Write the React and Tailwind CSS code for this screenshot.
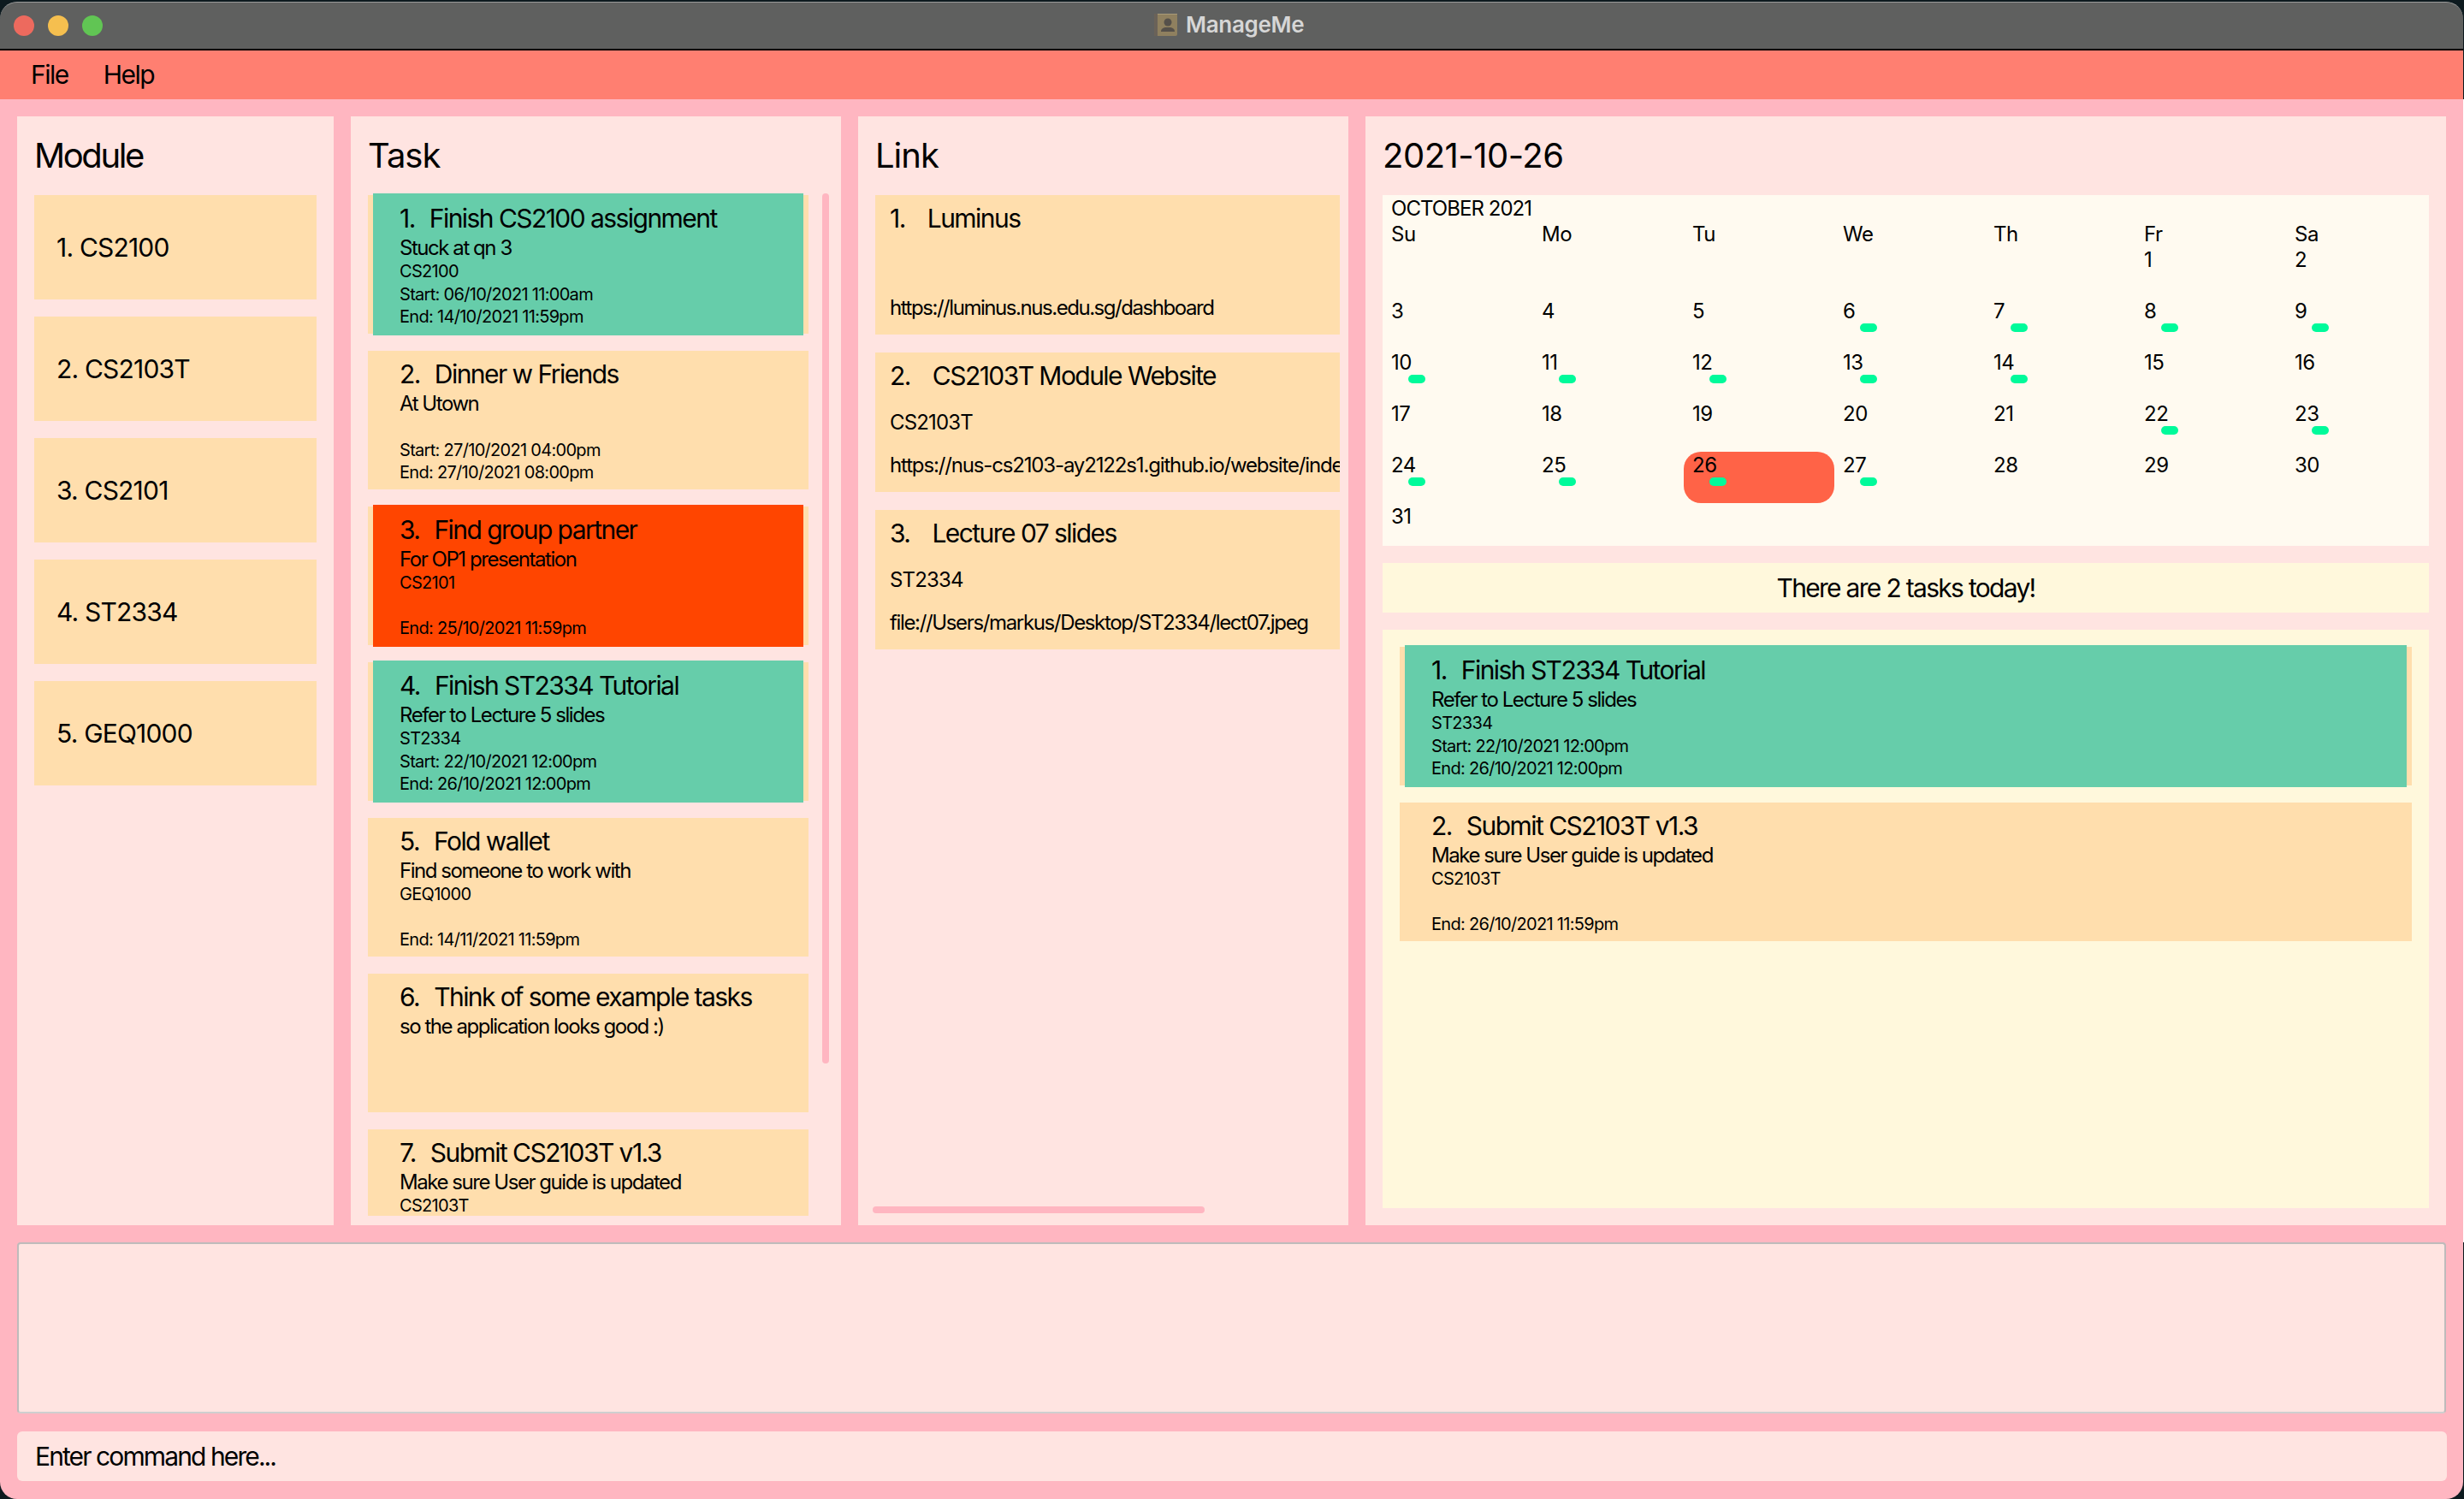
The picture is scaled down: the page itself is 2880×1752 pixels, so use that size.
const FONT = { fontFamily: 'Inter, sans-serif' }

const modules = ['CS2100', 'CS2103T', 'CS2101', 'ST2334', 'GEQ1000']

const tasks = [
  { name: 'Finish CS2100 assignment', desc: 'Stuck at qn 3', mod: 'CS2100', start: 'Start: 06/10/2021 11:00am', end: 'End: 14/10/2021 11:59pm', tone: 'green' },
  { name: 'Dinner w Friends', desc: 'At Utown', mod: '', start: 'Start: 27/10/2021 04:00pm', end: 'End: 27/10/2021 08:00pm' },
  { name: 'Find group partner', desc: 'For OP1 presentation', mod: 'CS2101', start: '', end: 'End: 25/10/2021 11:59pm', tone: 'red' },
  { name: 'Finish ST2334 Tutorial', desc: 'Refer to Lecture 5 slides', mod: 'ST2334', start: 'Start: 22/10/2021 12:00pm', end: 'End: 26/10/2021 12:00pm', tone: 'green' },
  { name: 'Fold wallet', desc: 'Find someone to work with', mod: 'GEQ1000', start: '', end: 'End: 14/11/2021 11:59pm' },
  { name: 'Think of some example tasks', desc: 'so the application looks good :)', mod: '', start: '', end: '' },
  { name: 'Submit CS2103T v1.3', desc: 'Make sure User guide is updated', mod: 'CS2103T', start: '', end: '' },
]

const todayTasks = [
  { name: 'Finish ST2334 Tutorial', desc: 'Refer to Lecture 5 slides', mod: 'ST2334', start: 'Start: 22/10/2021 12:00pm', end: 'End: 26/10/2021 12:00pm', tone: 'green' },
  { name: 'Submit CS2103T v1.3', desc: 'Make sure User guide is updated', mod: 'CS2103T', start: '', end: 'End: 26/10/2021 11:59pm' },
]

const links = [
  { name: 'Luminus', mod: '', url: 'https://luminus.nus.edu.sg/dashboard', urlClass: 'tracking-[-1.45px]' },
  { name: 'CS2103T Module Website', mod: 'CS2103T', url: 'https://nus-cs2103-ay2122s1.github.io/website/index.html', urlClass: 'tracking-[-1.15px]' },
  { name: 'Lecture 07 slides', mod: 'ST2334', url: 'file://Users/markus/Desktop/ST2334/lect07.jpeg', urlClass: 'tracking-[-1.35px]' },
]

const dayNames = ['Su', 'Mo', 'Tu', 'We', 'Th', 'Fr', 'Sa']
const busyDays = [6, 7, 8, 9, 10, 11, 12, 13, 14, 22, 23, 24, 25, 26, 27]
const days = [...Array(5).fill(null), ...Array.from({ length: 31 }, (_, i) => i + 1)]

function Heading({ children, className = 'tracking-[-1px]' }) {
  return <h2 className={`h-[92px] flex items-center text-[40px] text-black ${className}`}>{children}</h2>
}

function TaskCard({ index, task }) {
  const fill = task.tone === 'green' ? 'bg-[#66cdaa]' : task.tone === 'red' ? 'bg-[#ff4500]' : ''
  return (
    <div className="h-[162px] shrink-0 bg-[#ffdead] px-[6px]">
      <div className={`h-[166px] -my-[2px] pl-[31px] pt-[11px] ${fill}`}>
        <div className="h-[38px] leading-[37px] flex gap-[17px] text-[30px] tracking-[-1.55px]">
          <span>{index}.</span>
          <span>{task.name}</span>
        </div>
        <div className="h-[29px] leading-[29px] text-[24px] tracking-[-1.45px]">{task.desc}</div>
        <div className="h-[27px] leading-[26px] text-[20px] tracking-[-0.7px]">{task.mod}</div>
        <div className="h-[26px] leading-[26px] text-[20px] tracking-[-0.7px]">{task.start}</div>
        <div className="h-[26px] leading-[26px] text-[20px] tracking-[-0.7px]">{task.end}</div>
      </div>
    </div>
  )
}

function LinkCard({ index, link }) {
  return (
    <div className="h-[163px] shrink-0 bg-[#ffdead] pl-[17px] overflow-hidden">
      <div className="h-[55px] pt-[9px] leading-[37px] flex gap-[26px] text-[30px] tracking-[-1.55px]">
        <span>{index}.</span>
        <span>{link.name}</span>
      </div>
      <div className="h-[53px] leading-[53px] text-[24px] tracking-[-0.85px]">{link.mod}</div>
      <div className={`h-[48px] leading-[48px] text-[24px] whitespace-nowrap ${link.urlClass}`}>{link.url}</div>
    </div>
  )
}

function Calendar() {
  return (
    <div className="h-[410px] bg-[#fffaf0] overflow-hidden text-[24px] tracking-[-0.5px]">
      <div className="h-[31px] leading-[31px] pl-[10px] tracking-[-0.95px]">OCTOBER 2021</div>
      <div className="grid grid-cols-[repeat(7,176px)] h-[29px] leading-[29px]">
        {dayNames.map((d) => (
          <div key={d} className="pl-[10px]">{d}</div>
        ))}
      </div>
      <div className="grid grid-cols-[repeat(7,176px)] auto-rows-[60px]">
        {days.map((d, i) => (
          <div key={i} className={`relative pl-[10px] leading-[31px] rounded-[20px] ${d === 26 ? 'bg-[#ff6347]' : ''}`}>
            {d}
            {busyDays.includes(d) && (
              <span className="absolute left-[30px] top-[30px] w-[20px] h-[10px] rounded-[5px] bg-[#00fa9a]" />
            )}
          </div>
        ))}
      </div>
    </div>
  )
}

export default function App() {
  return (
    <div className="relative w-[2880px] h-[1752px] bg-[#0d1a1f] text-black" style={FONT}>
      <div className="w-[2879px] h-[1752px] pt-[2px] rounded-[20px] overflow-hidden flex flex-col">
        <div className="h-[57px] shrink-0 rounded-t-[20px] bg-[#5f605f] border-t border-[#9a9a9a] border-b-2 border-b-black flex items-center relative">
          <div className="flex gap-[16px] pl-[16px]">
            <span className="w-[24px] h-[24px] rounded-full bg-[#ed6a5e]" />
            <span className="w-[24px] h-[24px] rounded-full bg-[#f5bf4f]" />
            <span className="w-[24px] h-[24px] rounded-full bg-[#61c554]" />
          </div>
          <div className="absolute left-[1349px] top-[13px] flex items-center gap-[10px]">
            <svg width="27" height="26" viewBox="0 0 27 26">
              <rect x="0" y="0" width="27" height="26" rx="2" fill="#8f805f" />
              <rect x="0" y="0" width="4" height="26" fill="#6a6258" />
              <rect x="4" y="0" width="23" height="1" fill="#a89a78" />
              <circle cx="16" cy="10" r="4.5" fill="#55504a" />
              <path d="M8 21c0-3.500 2.500-4.500 5-5h6c2.500.5 5 1.500 5 5z" fill="#55504a" />
            </svg>
            <span className="text-[26px] font-semibold tracking-[-0.3px] text-[#d6d6d6] leading-[26px]">ManageMe</span>
          </div>
        </div>

        <div className="flex-1 flex flex-col bg-[#ffb6c1]">
          <div className="h-[57px] shrink-0 bg-[#ff7f71] flex items-center pl-[36px] gap-[41px] text-[30px] tracking-[-1.5px]">
            <span>File</span>
            <span>Help</span>
          </div>

          <div className="flex gap-[20px] px-[20px] pt-[20px]">
            <section className="w-[370px] h-[1296px] bg-[#ffe4e1] px-[20px]">
              <Heading className="tracking-[-2.4px]">Module</Heading>
              <div className="flex flex-col gap-[20px]">
                {modules.map((m, i) => (
                  <div key={m} className="h-[122px] bg-[#ffdead] flex items-center pl-[26px] text-[30px] tracking-[-0.8px]">
                    {i + 1}. {m}
                  </div>
                ))}
              </div>
            </section>

            <section className="w-[573px] h-[1296px] bg-[#ffe4e1] pl-[20px] flex flex-col">
              <Heading className="-mb-[2px] tracking-[-1px]">Task</Heading>
              <div className="flex h-[1195px] overflow-hidden">
                <div className="w-[515px] pt-[2px]">
                  <div className="flex flex-col gap-[20px]">
                    {tasks.map((t, i) => (
                      <TaskCard key={t.name} index={i + 1} task={t} />
                    ))}
                  </div>
                </div>
                <div className="ml-[16px] w-[8px] h-[1017px] rounded-full bg-[#ffb6c1]" />
              </div>
            </section>

            <section className="w-[573px] h-[1296px] bg-[#ffe4e1] pl-[20px] flex flex-col">
              <Heading>Link</Heading>
              <div className="w-[543px] flex-1 flex flex-col gap-[21px]">
                {links.map((l, i) => (
                  <LinkCard key={l.name} index={i + 1} link={l} />
                ))}
              </div>
              <div className="-ml-[3px] mb-[14px] w-[388px] h-[8px] rounded-[4px] bg-[#ffb6c1]" />
            </section>

            <section className="w-[1263px] h-[1296px] bg-[#ffe4e1] px-[20px] flex flex-col">
              <Heading className="tracking-[-0.5px]">2021-10-26</Heading>
              <Calendar />
              <div className="mt-[20px] h-[58px] bg-[#fff8dc] flex items-center justify-center text-[30px] tracking-[-1.7px]">
                There are 2 tasks today!
              </div>
              <div className="mt-[20px] h-[676px] bg-[#fff8dc] px-[20px] pt-[20px] flex flex-col gap-[20px]">
                {todayTasks.map((t, i) => (
                  <TaskCard key={t.name} index={i + 1} task={t} />
                ))}
              </div>
            </section>
          </div>

          <div className="mx-[20px] mt-[20px] h-[200px] bg-[#ffe4e1] border-2 border-[#bebbbb] border-b-[#cfcfcf] rounded-[4px]" />
          <div className="ml-[20px] mr-[19px] mt-[21px] h-[58px] bg-[#ffe4e1] rounded-[6px] flex items-center pl-[21px] text-[30px] tracking-[-1.9px]">
            Enter command here...
          </div>
        </div>
      </div>
      <div className="absolute right-0 top-[116px] w-[1px] h-[1336px] bg-white" />
    </div>
  )
}
